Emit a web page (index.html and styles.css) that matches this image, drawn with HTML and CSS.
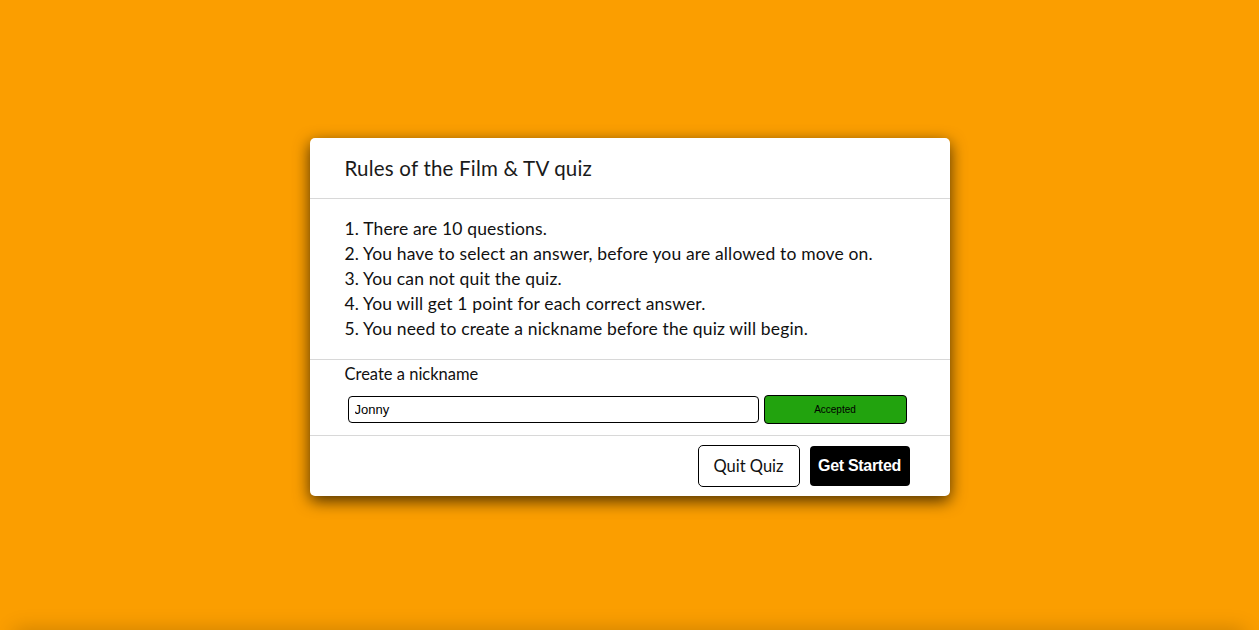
FILE: index.html
```html
<!DOCTYPE html>
<html lang="en">
<head>
<meta charset="utf-8">
<title>Film &amp; TV quiz</title>
<link rel="stylesheet" href="styles.css">
</head>
<body>
<main class="page">
  <section class="modal">
    <header class="modal-header">
      <h1 class="modal-title">Rules of the Film &amp; TV quiz</h1>
    </header>
    <div class="modal-body">
      <p>1. There are 10 questions.</p>
      <p>2. You have to select an answer, before you are allowed to move on.</p>
      <p>3. You can not quit the quiz.</p>
      <p>4. You will get 1 point for each correct answer.</p>
      <p>5. You need to create a nickname before the quiz will begin.</p>
    </div>
    <div class="nickname">
      <label class="nick-label" for="nick">Create a nickname</label>
      <div class="nick-row">
        <input id="nick" class="nick-input" type="text" value="Jonny">
        <button class="accepted" type="button">Accepted</button>
      </div>
    </div>
    <footer class="modal-footer">
      <button class="btn-quit" type="button">Quit Quiz</button>
      <button class="btn-start" type="button">Get Started</button>
    </footer>
  </section>
  <div class="offscreen"></div>
</main>
</body>
</html>
```

FILE: styles.css
```css
html, body {
  margin: 0;
  padding: 0;
}
body {
  background: #fb9e00;
  font-family: "Lato", "Open Sans", sans-serif;
  color: #111;
  overflow: hidden;
  height: 630px;
}
.page {
  padding-top: 138px;
}
.modal {
  width: 640px;
  margin: 0 auto;
  background: #fff;
  border-radius: 5px;
  box-shadow: 0 5px 16px rgba(0, 0, 0, 0.7);
}
.modal-header {
  padding: 15px 35px;
  border-bottom: 1px solid #d8d8d8;
}
.modal-title {
  margin: 0;
  font-size: 20.5px;
  font-weight: 400;
  line-height: 30px;
  color: #1a1a1a;
  letter-spacing: 0.2px;
}
.modal-body {
  padding: 17px 35px 18px;
  border-bottom: 1px solid #d8d8d8;
}
.modal-body p {
  margin: 0;
  font-size: 17.5px;
  line-height: 25px;
  letter-spacing: 0.15px;
}
.nickname {
  padding: 4px 35px 11px;
  border-bottom: 1px solid #d8d8d8;
  display: flex;
  flex-direction: column;
}
.nick-label {
  font-size: 16.5px;
  line-height: 20px;
}
.nick-row {
  display: flex;
  align-items: center;
  gap: 5px;
  margin-top: 11px;
  padding-left: 3px;
}
.nick-input {
  width: 411px;
  height: 27px;
  box-sizing: border-box;
  border: 1px solid #000;
  border-radius: 4px;
  padding: 0 6px;
  font-family: "Liberation Sans", Arial, sans-serif;
  font-size: 13px;
  color: #000;
  outline: none;
}
.accepted {
  width: 143px;
  height: 29px;
  box-sizing: border-box;
  border: 1px solid #000;
  border-radius: 4px;
  background: #22a30e;
  font-family: "Liberation Sans", Arial, sans-serif;
  font-size: 10px;
  color: #000;
  padding: 0;
}
.modal-footer {
  height: 60px;
  display: flex;
  justify-content: flex-end;
  align-items: center;
  gap: 10px;
  padding: 0 40px;
}
.btn-quit {
  width: 102px;
  height: 42px;
  box-sizing: border-box;
  background: #fff;
  border: 1px solid #000;
  border-radius: 5px;
  font-family: "Lato", "Open Sans", sans-serif;
  font-size: 16.5px;
  color: #111;
  padding: 0;
}
.btn-start {
  width: 100px;
  height: 40px;
  box-sizing: border-box;
  background: #000;
  border: none;
  border-radius: 4px;
  font-family: "Liberation Sans", Arial, sans-serif;
  font-size: 16px;
  font-weight: 700;
  letter-spacing: -0.3px;
  color: #fff;
  padding: 0;
}
.offscreen {
  margin: 134px 14px 0;
  height: 100px;
  box-shadow: 0 0 20px rgba(0, 0, 0, 0.2);
  background: #fb9e00;
}
```
